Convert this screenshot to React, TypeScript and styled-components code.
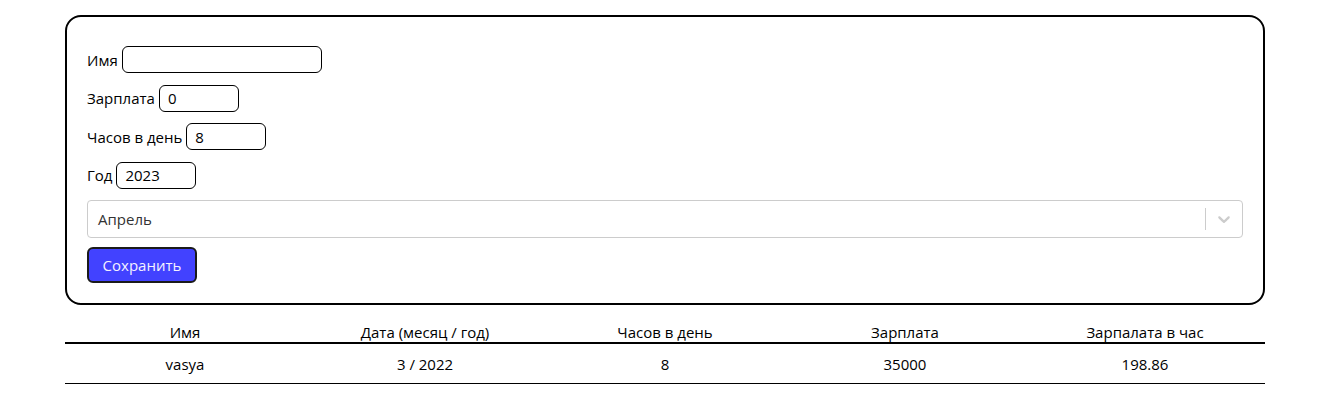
import React, { useState } from 'react';
import styled, { createGlobalStyle } from 'styled-components';

const GlobalStyle = createGlobalStyle`
body {
    margin: 0;
    font-family: "Open Sans", "Noto Sans", sans-serif;
    font-size: 15px;
    color: #000;
    background: #fff;
}
`;

const rows = [
    { name: 'vasya', month: 3, year: 2022, hours: 8, salary: 35000, perHour: '198.86' },
];

const App = () => {
    const [name, setName] = useState('');
    const [salary, setSalary] = useState('0');
    const [hours, setHours] = useState('8');
    const [year, setYear] = useState('2023');

    return (
        <Page>
            <GlobalStyle />
            <FormCard>
                <Field>
                    <Label>Имя</Label>
                    <TextInput w={200} value={name} onChange={(e) => setName(e.target.value)} />
                </Field>
                <Field>
                    <Label>Зарплата</Label>
                    <TextInput w={80} value={salary} onChange={(e) => setSalary(e.target.value)} />
                </Field>
                <Field>
                    <Label>Часов в день</Label>
                    <TextInput w={80} value={hours} onChange={(e) => setHours(e.target.value)} />
                </Field>
                <Field>
                    <Label>Год</Label>
                    <TextInput w={80} value={year} onChange={(e) => setYear(e.target.value)} />
                </Field>
                <Select>
                    <SelectValue>Апрель</SelectValue>
                    <Separator />
                    <Chevron>
                        <svg width="20" height="20" viewBox="0 0 20 20" fill="currentColor">
                            <path d="M4.516 7.548c0.436-0.446 1.043-0.481 1.576 0l3.908 3.747 3.908-3.747c0.533-0.481 1.141-0.446 1.574 0 0.436 0.445 0.408 1.197 0 1.615-0.406 0.418-4.695 4.502-4.695 4.502-0.217 0.223-0.502 0.335-0.787 0.335s-0.57-0.112-0.789-0.335c0 0-4.287-4.084-4.695-4.502s-0.436-1.170 0-1.615z" />
                        </svg>
                    </Chevron>
                </Select>
                <SaveButton>Сохранить</SaveButton>
            </FormCard>
            <Table>
                <thead>
                    <tr>
                        <Th>Имя</Th>
                        <Th>Дата (месяц / год)</Th>
                        <Th>Часов в день</Th>
                        <Th>Зарплата</Th>
                        <Th>Зарпалата в час</Th>
                    </tr>
                </thead>
                <tbody>
                    {rows.map((r) => (
                        <tr key={r.name}>
                            <Td>{r.name}</Td>
                            <Td>{r.month} / {r.year}</Td>
                            <Td>{r.hours}</Td>
                            <Td>{r.salary}</Td>
                            <Td>{r.perHour}</Td>
                        </tr>
                    ))}
                </tbody>
            </Table>
        </Page>
    );
};

export default App;

const Page = styled.div`
width: 1200px;
margin-left: 65px;
padding-top: 15px;
`;

const FormCard = styled.div`
border: 2px solid #000;
border-radius: 16px;
padding: 29px 20px 20px;
display: flex;
flex-direction: column;
`;

const Field = styled.div`
display: flex;
align-items: center;
gap: 4px;
height: 27px;
margin-bottom: 11.5px;
`;

const Label = styled.label`
line-height: 20px;
`;

const TextInput = styled.input<{ w: number }>`
box-sizing: border-box;
width: ${(p) => p.w}px;
height: 27px;
border: 1px solid #000;
border-radius: 6px;
padding: 0 8px;
font: inherit;
color: #000;
outline: none;
`;

const Select = styled.div`
box-sizing: border-box;
height: 38px;
border: 1px solid #ccc;
border-radius: 4px;
display: flex;
align-items: center;
padding-left: 10px;
`;

const SelectValue = styled.div`
flex: 1;
color: #333;
`;

const Separator = styled.span`
width: 1px;
height: 22px;
background: #ccc;
`;

const Chevron = styled.div`
width: 36px;
display: flex;
justify-content: center;
color: #ccc;
`;

const SaveButton = styled.button`
align-self: flex-start;
margin-top: 9px;
width: 110px;
height: 36px;
border: 2px solid #1a1a1a;
border-radius: 6px;
background: #4242ff;
color: #f4f0ff;
font: inherit;
cursor: pointer;
`;

const Table = styled.table`
width: 100%;
margin-top: 15px;
border-collapse: collapse;
table-layout: fixed;
`;

const Th = styled.th`
font-weight: normal;
padding: 2px 0 0;
height: 20px;
line-height: 20px;
border-bottom: 2px solid #000;
`;

const Td = styled.td`
text-align: center;
height: 39px;
padding: 0;
border-bottom: 1px solid #000;
`;
